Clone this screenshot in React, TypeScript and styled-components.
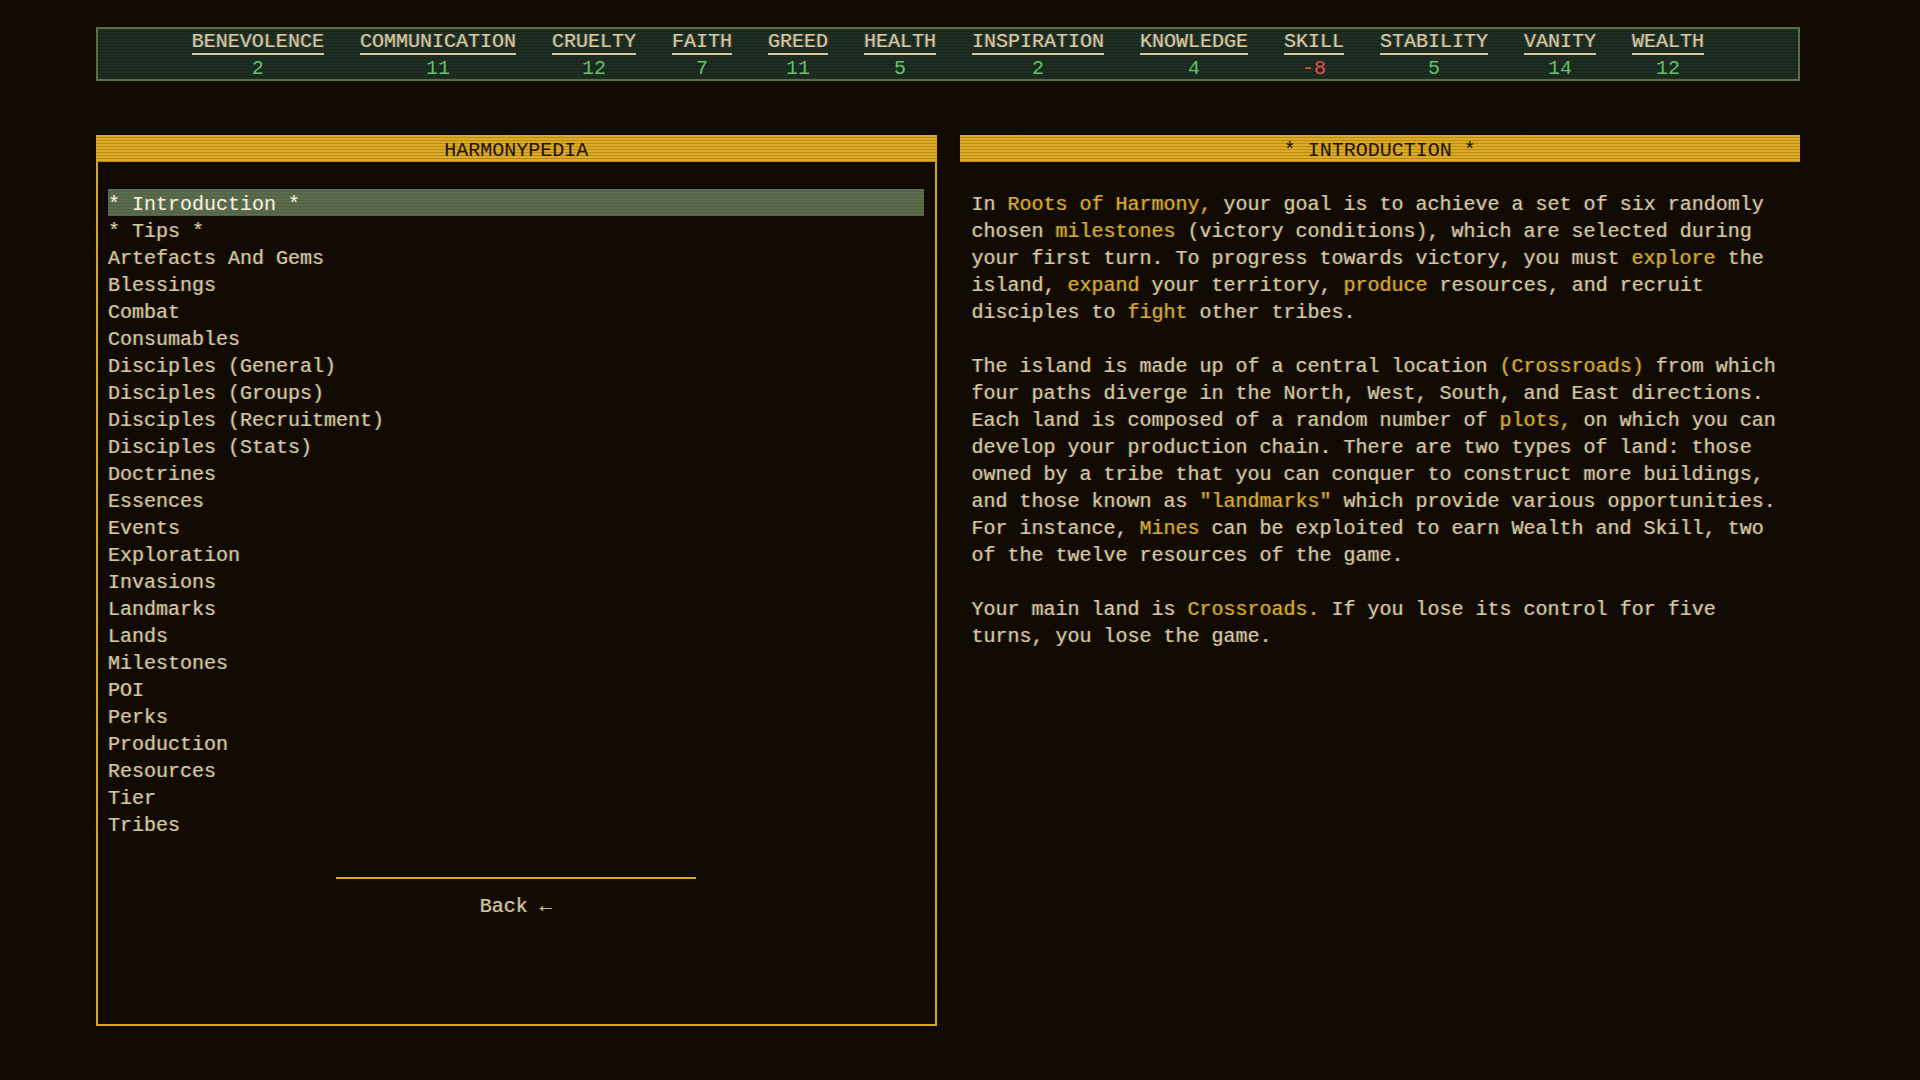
import React from "react";
import styled, { createGlobalStyle } from "styled-components";

const GlobalStyle = createGlobalStyle`
  html, body {
    margin: 0;
    padding: 0;
    background: #110a02;
  }
  body {
    font-family: "Liberation Mono", "DejaVu Sans Mono", monospace;
    font-size: 20px;
    color: #d8c9a0;
  }
  #root {
    min-height: 100vh;
  }
`;

const Page = styled.div`
  box-sizing: border-box;
  min-height: 100vh;
  padding: 27px 120px 0 96px;
  background:
    repeating-linear-gradient(
      to bottom,
      rgba(255, 255, 255, 0.012) 0px,
      rgba(255, 255, 255, 0.012) 1px,
      transparent 1px,
      transparent 3px
    ),
    #110a02;
`;

const StatsBar = styled.div`
  box-sizing: border-box;
  height: 54px;
  display: flex;
  justify-content: center;
  gap: 36px;
  padding-top: 2px;
  border: 2px solid #5a6d46;
  background:
    repeating-linear-gradient(
      to bottom,
      #1f2e22 0px,
      #1f2e22 2px,
      #18251b 2px,
      #18251b 3px
    );
`;

const Stat = styled.div`
  display: flex;
  flex-direction: column;
  align-items: center;
`;

const StatLabel = styled.span`
  line-height: 22px;
  color: #d8c9a0;
  border-bottom: 2px solid #d8c9a0;
  text-shadow: -1px 0 rgba(60, 160, 220, 0.35), 1px 0 rgba(230, 110, 40, 0.35);
`;

const StatValue = styled.span<{ $negative?: boolean }>`
  padding-top: 4px;
  line-height: 20px;
  color: ${(p) => (p.$negative ? "#e0554a" : "#5fc26a")};
`;

const Panels = styled.div`
  margin-top: 54px;
  display: grid;
  grid-template-columns: 1fr 1fr;
  gap: 23px;
  align-items: start;
`;

const Panel = styled.section`
  display: flex;
  flex-direction: column;
`;

const PanelHeader = styled.header`
  box-sizing: border-box;
  height: 27px;
  padding-top: 4px;
  line-height: 23px;
  text-align: center;
  color: #1c1304;
  background: repeating-linear-gradient(
    to bottom,
    #dcaa24 0px,
    #dcaa24 2px,
    #b98b17 2px,
    #b98b17 3px
  );
`;

const IndexBody = styled.div`
  box-sizing: border-box;
  height: 864px;
  display: flex;
  flex-direction: column;
  padding: 27px 11px 0 10px;
  border: 2px solid #d9a520;
  border-top: none;
`;

const ItemList = styled.ul`
  list-style: none;
  margin: 0;
  padding: 0;
`;

const Item = styled.li<{ $active?: boolean }>`
  box-sizing: border-box;
  height: 27px;
  padding-top: 4px;
  line-height: 23px;
  white-space: pre;
  color: ${(p) => (p.$active ? "#f6f2e2" : "#d8c9a0")};
  text-shadow: -1px 0 rgba(60, 160, 220, 0.3), 1px 0 rgba(230, 110, 40, 0.3);
  background: ${(p) =>
    p.$active
      ? "repeating-linear-gradient(to bottom, #5a6c4c 0px, #5a6c4c 2px, #50623f 2px, #50623f 3px)"
      : "transparent"};
`;

const Separator = styled.hr`
  width: 360px;
  height: 2px;
  margin: 40px auto 0;
  border: none;
  background: #d9a520;
`;

const BackButton = styled.button`
  align-self: center;
  margin-top: 14px;
  padding: 0;
  border: none;
  background: none;
  font: inherit;
  line-height: 27px;
  color: #d8c9a0;
  cursor: pointer;
  text-shadow: -1px 0 rgba(60, 160, 220, 0.3), 1px 0 rgba(230, 110, 40, 0.3);
`;

const ArticleBody = styled.div`
  padding: 29px 10px 0 12px;
`;

const Paragraph = styled.p`
  margin: 0 0 27px;
  line-height: 27px;
  color: #d8c9a0;
  text-shadow: -1px 0 rgba(60, 160, 220, 0.3), 1px 0 rgba(230, 110, 40, 0.3);
`;

const Em = styled.span`
  color: #dcaa24;
`;

const stats: { label: string; value: number }[] = [
  { label: "BENEVOLENCE", value: 2 },
  { label: "COMMUNICATION", value: 11 },
  { label: "CRUELTY", value: 12 },
  { label: "FAITH", value: 7 },
  { label: "GREED", value: 11 },
  { label: "HEALTH", value: 5 },
  { label: "INSPIRATION", value: 2 },
  { label: "KNOWLEDGE", value: 4 },
  { label: "SKILL", value: -8 },
  { label: "STABILITY", value: 5 },
  { label: "VANITY", value: 14 },
  { label: "WEALTH", value: 12 },
];

const entries = [
  "* Introduction *",
  "* Tips *",
  "Artefacts And Gems",
  "Blessings",
  "Combat",
  "Consumables",
  "Disciples (General)",
  "Disciples (Groups)",
  "Disciples (Recruitment)",
  "Disciples (Stats)",
  "Doctrines",
  "Essences",
  "Events",
  "Exploration",
  "Invasions",
  "Landmarks",
  "Lands",
  "Milestones",
  "POI",
  "Perks",
  "Production",
  "Resources",
  "Tier",
  "Tribes",
];

export default function App() {
  return (
    <>
      <GlobalStyle />
      <Page>
        <StatsBar>
          {stats.map((s) => (
            <Stat key={s.label}>
              <StatLabel>{s.label}</StatLabel>
              <StatValue $negative={s.value < 0}>{s.value}</StatValue>
            </Stat>
          ))}
        </StatsBar>

        <Panels>
          <Panel>
            <PanelHeader>HARMONYPEDIA</PanelHeader>
            <IndexBody>
              <ItemList>
                {entries.map((e, i) => (
                  <Item key={e} $active={i === 0}>
                    {e}
                  </Item>
                ))}
              </ItemList>
              <Separator />
              <BackButton>Back ←</BackButton>
            </IndexBody>
          </Panel>

          <Panel>
            <PanelHeader>* INTRODUCTION *</PanelHeader>
            <ArticleBody>
              <Paragraph>
                In <Em>Roots of Harmony,</Em> your goal is to achieve a set of
                six randomly chosen <Em>milestones</Em> (victory conditions),
                which are selected during your first turn. To progress towards
                victory, you must <Em>explore</Em> the island,{" "}
                <Em>expand</Em> your territory, <Em>produce</Em> resources, and
                recruit disciples to <Em>fight</Em> other tribes.
              </Paragraph>
              <Paragraph>
                The island is made up of a central location{" "}
                <Em>(Crossroads)</Em> from which four paths diverge in the
                North, West, South, and East directions. Each land is composed
                of a random number of <Em>plots,</Em> on which you can develop
                your production chain. There are two types of land: those owned
                by a tribe that you can conquer to construct more buildings, and
                those known as <Em>"landmarks"</Em> which provide various
                opportunities. For instance, <Em>Mines</Em> can be exploited to
                earn Wealth and Skill, two of the twelve resources of the game.
              </Paragraph>
              <Paragraph>
                Your main land is <Em>Crossroads.</Em> If you lose its control
                for five turns, you lose the game.
              </Paragraph>
            </ArticleBody>
          </Panel>
        </Panels>
      </Page>
    </>
  );
}
